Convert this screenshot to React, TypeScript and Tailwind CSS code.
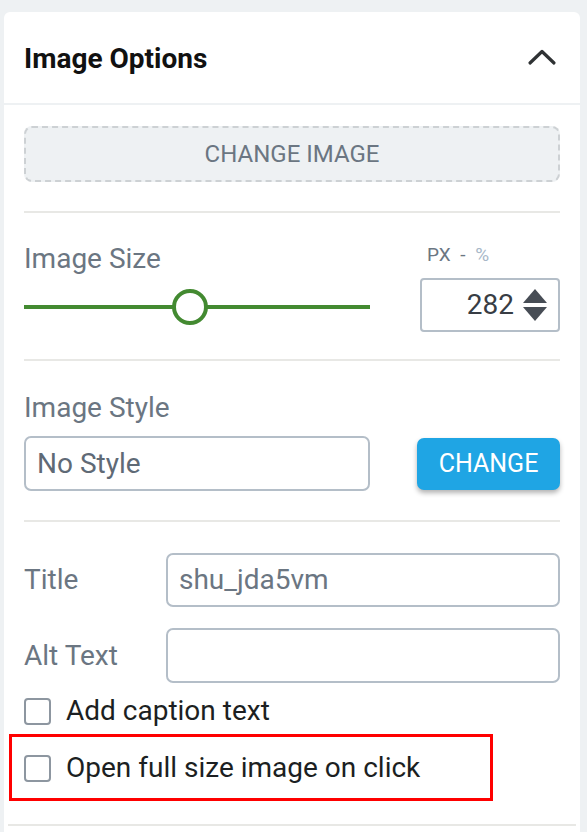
import { useState } from 'react';

function Chevron() {
  return (
    <svg width="30" height="18" viewBox="0 0 30 18" fill="none">
      <path d="M3 15L15 3.5 27 15" stroke="#2f3234" strokeWidth={3.2} strokeLinecap="round" strokeLinejoin="round" />
    </svg>
  );
}

function Spinner() {
  return (
    <svg width="26" height="34" viewBox="0 0 26 34">
      <path d="M13 1L25 15H1z" fill="#474d55" />
      <path d="M13 33L25 19H1z" fill="#474d55" />
    </svg>
  );
}

function Checkbox({ label }: { label: string }) {
  const [checked, setChecked] = useState(false);
  return (
    <label className="flex items-center gap-[15px] cursor-pointer">
      <span
        onClick={() => setChecked(!checked)}
        className="w-[27px] h-[27px] rounded-[4px] border-2 border-[#8d96a0] bg-white"
      />
      <span className="text-[28px] leading-[30px] text-[#1c1f22]">{label}</span>
    </label>
  );
}

export default function App() {
  const [size] = useState(282);

  return (
    <div className="min-h-screen bg-[#eef1f3] pt-[12px] pl-[4px] pr-[7px] font-['Roboto',sans-serif]">
      <div className="bg-white rounded-t-[6px] min-h-[820px]">
        {/* header */}
        <div className="h-[93px] px-[20px] flex items-center justify-between border-b-2 border-[#eef1f3]">
          <h2 className="text-[28px] leading-[34px] font-bold text-[#111] pt-[2px]">Image Options</h2>
          <div className="mr-[3px] mt-[-2px]">
            <Chevron />
          </div>
        </div>

        <div className="px-[20px]">
          {/* change image */}
          <div className="pt-[21px] pb-[29px] border-b-2 border-[#e8e8e5]">
            <button className="w-full h-[56px] rounded-[8px] border-2 border-dashed border-[#cdd1d4] bg-[#eef1f3] text-[24px] text-[#6b7682]">
              CHANGE IMAGE
            </button>
          </div>

          {/* image size */}
          <div className="flex justify-between pt-[30px] pb-[27px] border-b-2 border-[#e8e8e5]">
            <div className="w-[346px]">
              <div className="text-[28px] leading-[32px] text-[#6b7682]">Image Size</div>
              <div className="relative h-[36px] mt-[14px] flex items-center">
                <div className="w-full h-[4px] bg-[#438a31]" />
                <div className="absolute left-[148px] top-0 w-[36px] h-[36px] rounded-full border-[4px] border-[#438a31] bg-white" />
              </div>
            </div>
            <div className="w-[140px]">
              <div className="text-[19px] leading-[20px] text-[#6b7682] pl-[7px] mt-[2px]">
                PX <span className="mx-[5px]">-</span> <span className="text-[#a7b7c8]">%</span>
              </div>
              <div className="mt-[13px] h-[54px] border-2 border-[#b4bec8] rounded-[4px] flex items-center justify-end pr-[10px] gap-[8px]">
                <span className="text-[28px] text-[#383d44]">{size}</span>
                <Spinner />
              </div>
            </div>
          </div>

          {/* image style */}
          <div className="pt-[31px] pb-[29px] border-b-2 border-[#e8e8e5]">
            <div className="text-[28px] leading-[32px] text-[#6b7682]">Image Style</div>
            <div className="flex items-center justify-between mt-[12px]">
              <div className="w-[346px] h-[55px] rounded-[7px] border-2 border-[#b4bec8] flex items-center px-[11px] text-[28px] text-[#5f6a76]">
                No Style
              </div>
              <button className="w-[143px] h-[52px] rounded-[7px] bg-[#1fa5e4] text-white text-[25px] shadow-[0_3px_5px_rgba(0,0,0,0.3)]">
                CHANGE
              </button>
            </div>
          </div>

          {/* title & alt */}
          <div className="pt-[31px] pb-[41px]">
            <div className="flex items-center">
              <div className="w-[142px] text-[28px] leading-[32px] text-[#6b7682]">Title</div>
              <div className="flex-1 h-[54px] rounded-[7px] border-2 border-[#b4bec8] flex items-center px-[11px] text-[28px] text-[#6b7682]">
                shu_jda5vm
              </div>
            </div>
            <div className="flex items-center mt-[21px]">
              <div className="w-[142px] text-[28px] leading-[32px] text-[#6b7682]">Alt Text</div>
              <div className="flex-1 h-[55px] rounded-[7px] border-2 border-[#b4bec8]" />
            </div>
            <div className="mt-[13px]">
              <Checkbox label="Add caption text" />
            </div>
            <div className="relative mt-[27px]">
              <Checkbox label="Open full size image on click" />
              <div className="absolute left-[-15px] top-[-19px] w-[484px] h-[67px] border-[3.5px] border-[#ff0000] pointer-events-none" />
            </div>
          </div>
        </div>
        <div className="mx-[4px] border-b-2 border-[#e8e8e5]" />
      </div>
    </div>
  );
}
